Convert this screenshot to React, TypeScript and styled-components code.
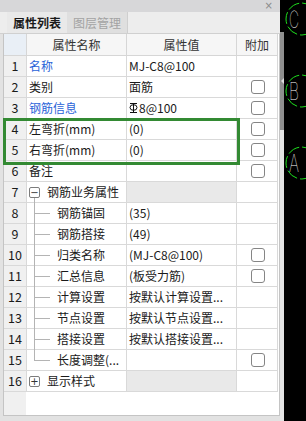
import React from "react";
import styled, { createGlobalStyle } from "styled-components";

const GlobalStyle = createGlobalStyle`
  html, body {
    margin: 0;
    padding: 0;
  }
  body {
    background: #000;
    font-family: "Noto Sans CJK SC", "Noto Sans", sans-serif;
  }
`;

type Kind = "plain" | "group" | "child";

interface RowData {
  no: number;
  name: string;
  value?: React.ReactNode;
  link?: boolean;
  check?: boolean;
  kind?: Kind;
  open?: boolean;
  last?: boolean;
}

const RebarMark = () => (
  <svg width="9" height="12" viewBox="0 0 9 12" style={{ marginRight: 1 }}>
    <g fill="none" stroke="#111" strokeWidth="1">
      <ellipse cx="4.5" cy="5.5" rx="3.5" ry="2.8" />
      <line x1="4.5" y1="1" x2="4.5" y2="11" />
      <line x1="1" y1="1.5" x2="8" y2="1.5" />
      <line x1="1" y1="10.5" x2="8" y2="10.5" />
    </g>
  </svg>
);

const rows: RowData[] = [
  { no: 1, name: "名称", value: "MJ-C8@100", link: true },
  { no: 2, name: "类别", value: "面筋", check: true },
  {
    no: 3,
    name: "钢筋信息",
    value: (
      <>
        <RebarMark />8@100
      </>
    ),
    link: true,
    check: true,
  },
  { no: 4, name: "左弯折(mm)", value: "(0)", check: true },
  { no: 5, name: "右弯折(mm)", value: "(0)", check: true },
  { no: 6, name: "备注", value: "", check: true },
  { no: 7, name: "钢筋业务属性", kind: "group", open: true },
  { no: 8, name: "钢筋锚固", value: "(35)", kind: "child" },
  { no: 9, name: "钢筋搭接", value: "(49)", kind: "child" },
  { no: 10, name: "归类名称", value: "(MJ-C8@100)", kind: "child", check: true },
  { no: 11, name: "汇总信息", value: "(板受力筋)", kind: "child", check: true },
  { no: 12, name: "计算设置", value: "按默认计算设置...", kind: "child" },
  { no: 13, name: "节点设置", value: "按默认节点设置...", kind: "child" },
  { no: 14, name: "搭接设置", value: "按默认搭接设置...", kind: "child" },
  { no: 15, name: "长度调整(...", value: "", kind: "child", check: true, last: true },
  { no: 16, name: "显示样式", kind: "group", open: false },
];

// axis bubbles on the drawing canvas
const axes = [
  { label: "C", cy: 19 },
  { label: "B", cy: 91 },
  { label: "A", cy: 163 },
];

export default function App() {
  return (
    <>
      <GlobalStyle />
      <Screen>
        <Panel>
          <TitleBar>
            <Close>×</Close>
          </TitleBar>
          <TabBar>
            <Tab $active>属性列表</Tab>
            <Tab>图层管理</Tab>
          </TabBar>
          <Body>
            <TableBox>
              <HeaderRow>
                <HeadCell $corner />
                <HeadCell>属性名称</HeadCell>
                <HeadCell>属性值</HeadCell>
                <HeadCell>附加</HeadCell>
              </HeaderRow>
              {rows.map((r) => (
                <GridRow key={r.no}>
                  <NoCell>{r.no}</NoCell>
                  <NameCell $link={r.link}>
                    {r.kind === "group" && (
                      <>
                        <Toggle $open={r.open}>{r.open ? "−" : "+"}</Toggle>
                        <GroupLabel>{r.name}</GroupLabel>
                      </>
                    )}
                    {r.kind === "child" && (
                      <>
                        <Guide $last={r.last} />
                        {r.name}
                      </>
                    )}
                    {(!r.kind || r.kind === "plain") && r.name}
                  </NameCell>
                  <ValueCell $group={r.kind === "group"}>{r.value}</ValueCell>
                  <AttachCell>{r.check && <CheckBox />}</AttachCell>
                </GridRow>
              ))}
              <Filler>
                <FillerNo />
                <div />
              </Filler>
              <Highlight />
            </TableBox>
          </Body>
        </Panel>
        <Splitter>
          <SplitTop />
          <Thumb>
            <Arrow />
          </Thumb>
        </Splitter>
        <Canvas>
          <svg width="22" height="421" viewBox="0 0 22 421">
            <g fill="none" stroke="#1ee01e" strokeWidth="1" strokeDasharray="12 3">
              {axes.map((a) => (
                <circle key={a.label} cx="18" cy={a.cy} r="16" />
              ))}
            </g>
            <g fill="#fff" fontFamily="Inter, sans-serif" fontWeight="100" fontSize="24">
              {axes.map((a) => (
                <text
                  key={a.label}
                  x="5"
                  y={a.cy + 9}
                  textLength="10"
                  lengthAdjust="spacingAndGlyphs"
                >
                  {a.label}
                </text>
              ))}
            </g>
          </svg>
        </Canvas>
      </Screen>
    </>
  );
}

const Screen = styled.div`
  display: flex;
  width: 306px;
  height: 421px;
  overflow: hidden;
  background: #000;
`;

const Panel = styled.div`
  width: 280px;
  height: 421px;
  display: flex;
  flex-direction: column;
  background: #e2e2e2;
  flex-shrink: 0;
`;

const TitleBar = styled.div`
  height: 12px;
  background: #d7d7d9;
  display: flex;
  align-items: center;
  justify-content: flex-end;
  padding-right: 7px;
`;

const Close = styled.span`
  font-family: "DejaVu Sans", sans-serif;
  font-size: 10px;
  line-height: 10px;
  color: #8a8a8a;
`;

const TabBar = styled.div`
  height: 22px;
  box-sizing: border-box;
  display: flex;
  padding-left: 7px;
  background: #ededed;
  border-bottom: 1px solid #d0d0d0;
`;

const Tab = styled.div<{ $active?: boolean }>`
  width: 60px;
  height: 21px;
  display: flex;
  align-items: center;
  justify-content: center;
  font-size: 12px;
  font-weight: ${(p) => (p.$active ? 700 : 400)};
  color: ${(p) => (p.$active ? "#1a1a1a" : "#a3a3a3")};
  background: ${(p) => (p.$active ? "#e9e9e9" : "#dfdfdf")};
  border-right: ${(p) => (p.$active ? "none" : "1px solid #cfcfcf")};
`;

const Body = styled.div`
  flex: 1;
  display: flex;
  padding: 0 0 5px 3px;
  min-height: 0;
`;

const TableBox = styled.div`
  position: relative;
  flex: 1;
  display: flex;
  flex-direction: column;
  background: #fff;
  border: 1px solid #c4c4c4;
  border-top: none;
`;

const columns = "23px 100px 110px 41px";

const HeaderRow = styled.div`
  display: grid;
  grid-template-columns: ${columns};
  height: 22px;
`;

const HeadCell = styled.div<{ $corner?: boolean }>`
  box-sizing: border-box;
  border-right: 1px solid #d6d6d6;
  border-bottom: 1px solid #d6d6d6;
  background: ${(p) => (p.$corner ? "#e9eff6" : "#f6f6f6")};
  display: flex;
  align-items: center;
  justify-content: center;
  font-size: 12px;
  color: #333;
`;

const GridRow = styled.div`
  display: grid;
  grid-template-columns: ${columns};
  height: 21px;
`;

const Cell = styled.div`
  box-sizing: border-box;
  border-right: 1px solid #d9d9d9;
  border-bottom: 1px solid #d9d9d9;
  display: flex;
  align-items: center;
  font-size: 12px;
  line-height: 20px;
  color: #1a1a1a;
  white-space: nowrap;
  overflow: hidden;
`;

const NoCell = styled(Cell)`
  justify-content: center;
  background: #f0f0f0;
  font-size: 12.5px;
`;

const NameCell = styled(Cell)<{ $link?: boolean }>`
  padding-left: 2px;
  color: ${(p) => (p.$link ? "#2a63d8" : "#1a1a1a")};
  overflow: visible;
`;

const ValueCell = styled(Cell)<{ $group?: boolean }>`
  padding-left: 2px;
  background: ${(p) => (p.$group ? "#e9e9e9" : "#fff")};
`;

const AttachCell = styled(Cell)`
  justify-content: center;
  padding-left: 1px;
`;

const CheckBox = styled.span`
  width: 14px;
  height: 14px;
  box-sizing: border-box;
  border: 1px solid #858585;
  border-radius: 3px;
  background: #fff;
`;

const Toggle = styled.span<{ $open?: boolean }>`
  position: relative;
  width: 11px;
  height: 11px;
  box-sizing: border-box;
  border: 1px solid #7c7c7c;
  border-radius: 2px;
  display: flex;
  align-items: center;
  justify-content: center;
  font-family: "DejaVu Sans", sans-serif;
  font-size: 10px;
  line-height: 9px;
  color: #333;
  margin-right: 7px;

  &::after {
    content: "";
    display: ${(p) => (p.$open ? "block" : "none")};
    position: absolute;
    left: 4px;
    top: 10px;
    width: 1px;
    height: 6px;
    background: #b4b4b4;
  }
`;

const GroupLabel = styled.span`
  color: #1a1a1a;
`;

const Guide = styled.span<{ $last?: boolean }>`
  position: relative;
  align-self: stretch;
  width: 28px;
  flex-shrink: 0;

  &::before {
    content: "";
    position: absolute;
    left: 5px;
    top: 0;
    width: 1px;
    height: ${(p) => (p.$last ? "11px" : "21px")};
    background: #b4b4b4;
  }

  &::after {
    content: "";
    position: absolute;
    left: 5px;
    top: 10px;
    width: 16px;
    height: 1px;
    background: #b4b4b4;
  }
`;

const Filler = styled.div`
  flex: 1;
  display: grid;
  grid-template-columns: 22px 1fr;
`;

const FillerNo = styled.div`
  background: #f0f0f0;
`;

const Highlight = styled.div`
  position: absolute;
  left: -1px;
  top: 84px;
  width: 237px;
  height: 47px;
  box-sizing: border-box;
  border: 3px solid #338a33;
  pointer-events: none;
`;

const Splitter = styled.div`
  width: 4px;
  height: 421px;
  flex-shrink: 0;
  display: flex;
  flex-direction: column;
  background: #e4e4e4;
`;

const SplitTop = styled.div`
  height: 32px;
  background: #000;
`;

const Thumb = styled.div`
  height: 98px;
  background: #8f8f8f;
  display: flex;
  flex-direction: column;
  align-items: center;
  padding-top: 46px;
  box-sizing: border-box;
`;

const Arrow = styled.span`
  width: 0;
  height: 0;
  border-top: 3px solid transparent;
  border-bottom: 3px solid transparent;
  border-right: 3px solid #dcdcdc;
`;

const Canvas = styled.div`
  flex: 1;
  background: #000;
  height: 421px;
`;
